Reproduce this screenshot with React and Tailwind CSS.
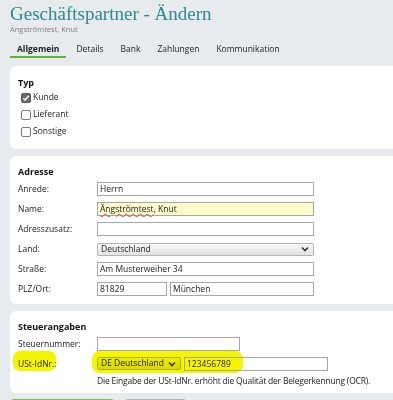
const FONT = { fontFamily: '"Open Sans", "Noto Sans", sans-serif' }

function Chevron() {
  return (
    <svg width="8" height="6" viewBox="0 0 8 6" className="shrink-0">
      <path d="M1 1.5 L4 4.5 L7 1.5" fill="none" stroke="#333" strokeWidth="1.6" />
    </svg>
  )
}

function Checkbox({ checked, label }) {
  return (
    <div className="h-[17px] flex items-center">
      <span
        className={`ml-[3px] w-[10px] h-[10px] rounded-[2px] border flex items-center justify-center ${
          checked ? 'bg-[#6b6b6b] border-[#5a5a5a]' : 'bg-white border-[#7a7a7a]'
        }`}
      >
        {checked && (
          <svg width="8" height="8" viewBox="0 0 8 8">
            <path d="M1.3 4.2 L3.2 6 L6.8 1.8" fill="none" stroke="#fff" strokeWidth="1.4" />
          </svg>
        )}
      </span>
      <span className="ml-[2px] text-[8.5px] text-[#222]">{label}</span>
    </div>
  )
}

function Input({ value, className = '', children }) {
  return (
    <div className={`h-[14px] border border-[#a6a6a6] px-[2px] flex items-center text-[8.5px] text-[#222] ${className}`}>
      {children || value}
    </div>
  )
}

function Select({ value, className = '' }) {
  return (
    <div
      className={`h-[13px] border border-[#b5b5b5] rounded-[2px] bg-gradient-to-b from-[#f7f7f7] to-[#e2e2e2] pl-[3px] pr-[4px] flex items-center justify-between text-[8.5px] text-[#222] ${className}`}
    >
      <span>{value}</span>
      <Chevron />
    </div>
  )
}

function Row({ label, children }) {
  return (
    <div className="flex items-center h-[14px]">
      <span className="w-[79px] shrink-0 text-[8.5px] text-[#222]">{label}</span>
      {children}
    </div>
  )
}

function Card({ title, className = '', children }) {
  return (
    <div className={`relative ml-[10px] w-[400px] bg-white rounded-[6px] pl-[8px] pt-[10px] ${className}`}>
      <div className="h-[12px] leading-[12px] text-[9px] font-bold text-[#111]">{title}</div>
      {children}
    </div>
  )
}

const TABS = ['Allgemein', 'Details', 'Bank', 'Zahlungen', 'Kommunikation']

export default function App() {
  return (
    <div className="w-[393px] h-[400px] overflow-hidden bg-[#e8ebee]" style={FONT}>
      <div className="pl-[10px] pt-[3px]">
        <div
          className="text-[19px] leading-[22px] text-[#2a8a8d]"
          style={{ fontFamily: '"Liberation Serif", serif' }}
        >
          Geschäftspartner - Ändern
        </div>
        <div className="text-[7.5px] leading-[9px] text-[#7d7d7d]">Ängströmtest, Knut</div>
      </div>

      <div className="flex pl-[10px] mt-[8px] gap-[3px]">
        {TABS.map((t, i) => (
          <div
            key={t}
            className={`px-[7px] h-[16px] flex items-center text-[8.5px] text-[#222] border-b-2 ${
              i === 0 ? 'font-bold border-[#5cb531]' : 'border-transparent'
            }`}
          >
            {t}
          </div>
        ))}
      </div>

      <Card title="Typ" className="mt-[8px] h-[83px] pt-[11px]">
        <Checkbox checked label="Kunde" />
        <Checkbox label="Lieferant" />
        <Checkbox label="Sonstige" />
      </Card>

      <Card title="Adresse" className="mt-[7px] h-[148px]">
        <div className="mt-[4px] flex flex-col gap-[6px]">
          <Row label="Anrede:">
            <Input value="Herrn" className="w-[217px]" />
          </Row>
          <Row label="Name:">
            <Input className="w-[217px] bg-[#fdfbc9]">
              <span className="underline decoration-wavy decoration-[#e04040] underline-offset-[1px]">Ängströmtest</span>
              <span>, Knut</span>
            </Input>
          </Row>
          <Row label="Adresszusatz:">
            <Input className="w-[217px]" />
          </Row>
          <Row label="Land:">
            <Select value="Deutschland" className="w-[217px]" />
          </Row>
          <Row label="Straße:">
            <Input value="Am Musterweiher 34" className="w-[217px]" />
          </Row>
          <Row label="PLZ/Ort:">
            <div className="flex gap-[3px]">
              <Input value="81829" className="w-[70px]" />
              <Input value="München" className="w-[144px]" />
            </div>
          </Row>
        </div>
      </Card>

      <Card title="Steuerangaben" className="mt-[7px] h-[82px]">
        <span className="absolute left-[3px] top-[40px] w-[43px] h-[20px] rounded-[7px] bg-[#f6f500] mix-blend-multiply" />
        <span className="absolute left-[82px] top-[40px] w-[151px] h-[22px] rounded-[8px] bg-[#f6f500] mix-blend-multiply" />
        <div className="relative mt-[4px] flex flex-col gap-[6px]">
          <Row label="Steuernummer:">
            <Input className="w-[143px]" />
          </Row>
          <Row label="USt-IdNr.:">
            <div className="flex gap-[3px]">
              <Select value="DE Deutschland" className="w-[84px] mix-blend-multiply" />
              <Input value="123456789" className="w-[144px] bg-white/0" />
            </div>
          </Row>
        </div>
        <div className="relative ml-[79px] mt-[4px] text-[8.5px] tracking-[-0.2px] text-[#222] leading-[12px]">
          Die Eingabe der USt-IdNr. erhöht die Qualität der Belegerkennung (OCR).
        </div>
      </Card>

      <div className="flex ml-[11px] mt-[6px] gap-[11px]">
        <div className="w-[103px] h-[20px] rounded-[3px] bg-[#7cc142]" />
        <div className="w-[61px] h-[20px] rounded-[3px] bg-[#b4b4b4]" />
      </div>
    </div>
  )
}
